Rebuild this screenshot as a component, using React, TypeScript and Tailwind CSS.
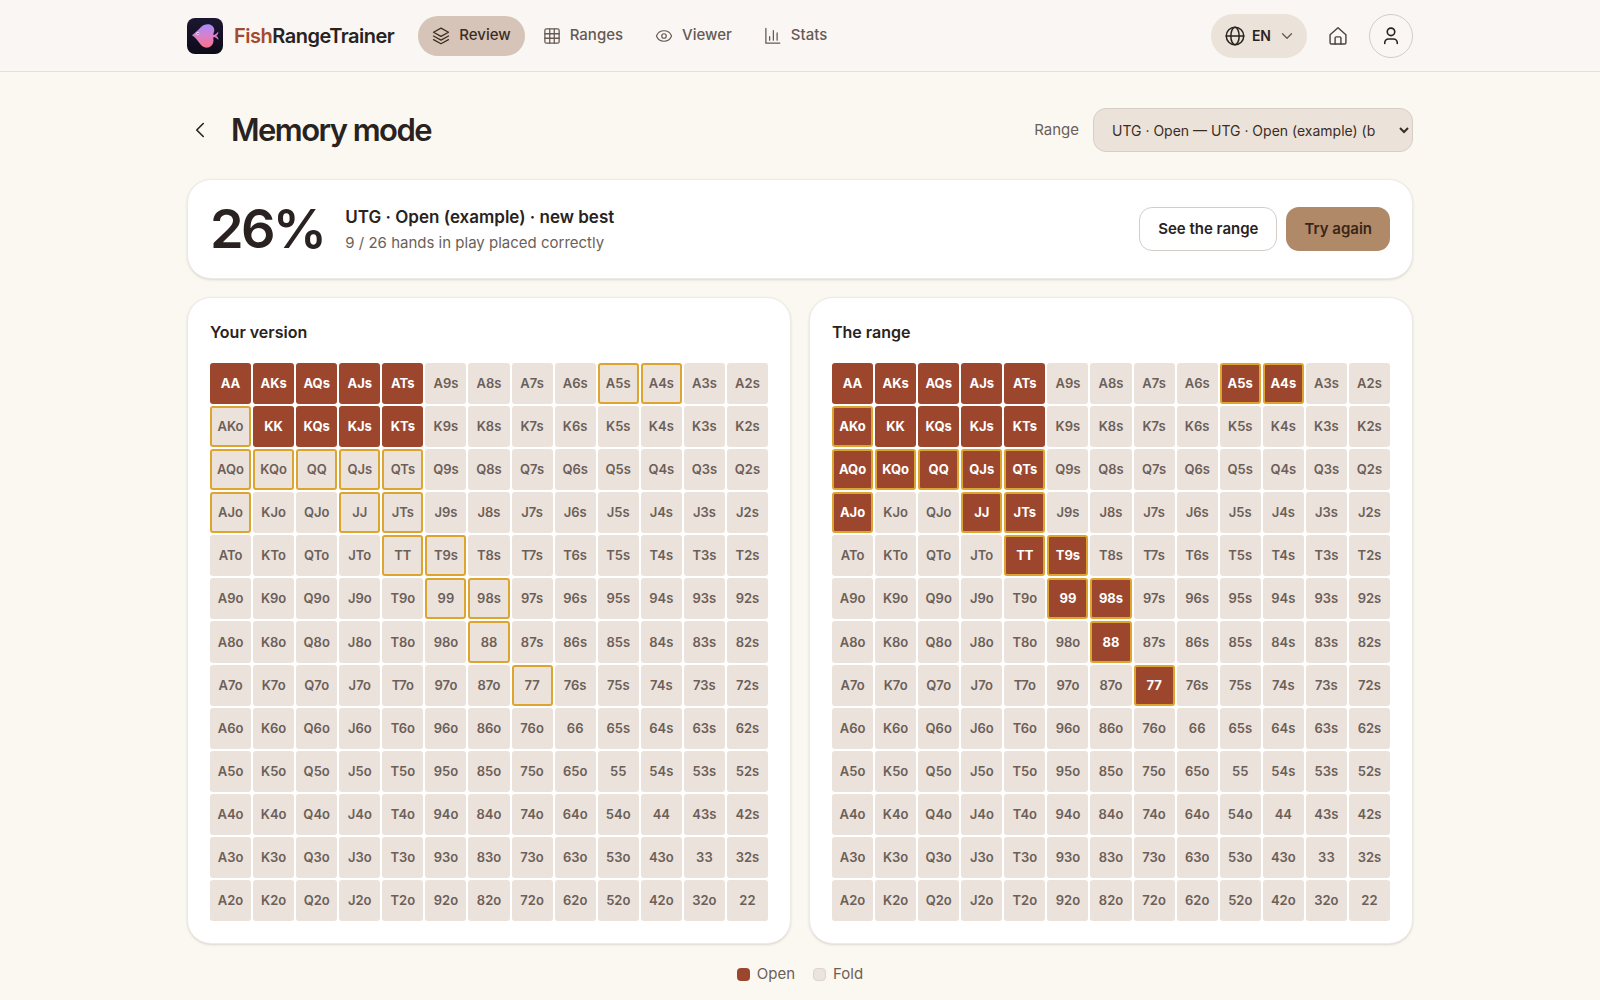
import React from "react";
import { ChevronDown, ChevronLeft, Eye } from "lucide-react";

const RANKS = "AKQJT98765432".split("");

const PLAYED = new Set(["AA", "AKs", "AQs", "AJs", "ATs", "KK", "KQs", "KJs", "KTs"]);
const MISSED = new Set([
  "A5s", "A4s", "AKo", "AQo", "KQo", "QQ", "QJs", "QTs", "AJo", "JJ", "JTs", "TT", "T9s", "99", "98s", "88", "77",
]);

function handAt(row: number, col: number) {
  if (row === col) return RANKS[row] + RANKS[col];
  return row < col ? RANKS[row] + RANKS[col] + "s" : RANKS[col] + RANKS[row] + "o";
}

const HANDS = RANKS.flatMap((_, row) => RANKS.map((__, col) => handAt(row, col)));

function Svg({ size, children, width = 1.7 }: { size: string; children: React.ReactNode; width?: number }) {
  return (
    <svg viewBox="0 0 24 24" className={size} fill="none" stroke="currentColor" strokeWidth={width} strokeLinecap="round" strokeLinejoin="round" aria-hidden="true">
      {children}
    </svg>
  );
}

function Logo() {
  return (
    <svg viewBox="0 0 36 36" className="size-9" aria-hidden="true">
      <defs>
        <linearGradient id="fish" x1="0" y1="0" x2="0" y2="1">
          <stop offset="0" stopColor="#a78bfa" />
          <stop offset="0.5" stopColor="#d980cc" />
          <stop offset="1" stopColor="#fb7185" />
        </linearGradient>
        <linearGradient id="tile" x1="0" y1="0" x2="0" y2="1">
          <stop offset="0" stopColor="#1c1730" />
          <stop offset="1" stopColor="#0d0a18" />
        </linearGradient>
      </defs>
      <rect width="36" height="36" rx="8" fill="url(#tile)" />
      <path
        d="M5 17.200C8.500 14.500 11 12 13.500 9.500C16.200 6.700 20 5.600 23 6.600C27 8 28.300 12 26.600 15.200C26.200 16 26.300 16.600 26.800 17C28.500 16.500 29.800 15.500 31.300 13.600C31.500 15.400 30.800 16.800 29.300 17.900C31 18.800 31.700 20.200 31.300 22C29.900 20.200 28.500 19.300 26.800 19C26.200 19.500 26.200 20.300 26.400 21.200C27 25.200 24.500 28.800 21 29.500C17.500 30.200 14.800 28.300 13 25.800C10.800 22.500 8.500 19.500 5 17.200Z"
        fill="url(#fish)"
      />
      <circle cx="10.800" cy="15.600" r="1.500" fill="#f5e9ff" />
      <circle cx="11" cy="15.600" r="0.700" fill="#1c1730" />
    </svg>
  );
}

const NAV = [
  {
    label: "Review",
    icon: (
      <Svg size="size-[18px]">
        <path d="M12 1.500 22 7l-10 5.500L2 7Z" />
        <path d="m2 12 10 5.500L22 12" />
        <path d="m2 16.800 10 5.500 10-5.500" />
      </Svg>
    ),
  },
  {
    label: "Ranges",
    icon: (
      <Svg size="size-[18px]">
        <rect x="2.500" y="2.500" width="19" height="19" rx="2" />
        <path d="M2.500 9h19M2.500 15h19M9 2.500v19M15 2.500v19" />
      </Svg>
    ),
  },
  { label: "Viewer", icon: <Eye className="size-[18px]" strokeWidth={1.6} aria-hidden="true" /> },
  {
    label: "Stats",
    icon: (
      <Svg size="size-[18px]">
        <path d="M2.500 2v19.500H21M7.500 17.500v-4.500M12.500 17.500V5M17.500 17.500V8" />
      </Svg>
    ),
  },
];

function Header() {
  return (
    <header className="border-b border-[#e3dedb] bg-[#faf6f3]">
      <div className="mx-auto flex h-[71px] max-w-[1226px] items-center">
        <a href="#home" className="flex items-center gap-[11px] text-xl font-semibold tracking-tight text-[#292220]">
          <Logo />
          <span>
            <span className="text-[#a44a2e]">Fish</span>RangeTrainer
          </span>
        </a>
        <nav className="ml-6 flex gap-1">
          {NAV.map((item, i) => (
            <a
              key={item.label}
              href={"#" + item.label.toLowerCase()}
              className={
                i === 0
                  ? "flex h-10 items-center gap-[9px] rounded-full bg-[#d5c4b7] px-3.5 text-[15px] font-medium text-[#3c2d24]"
                  : "flex h-10 items-center gap-[9px] rounded-full px-3.5 text-[15px] font-medium text-[#655a54]"
              }
            >
              {item.icon}
              {item.label}
            </a>
          ))}
        </nav>
        <div className="ml-auto flex items-center">
          <button className="flex h-11 items-center gap-[7px] rounded-full bg-[#ebe2da] pr-[11px] pl-3.5 text-sm font-semibold text-[#292220]">
            <Svg size="size-5" width={1.8}>
              <circle cx="12" cy="12" r="10.500" />
              <ellipse cx="12" cy="12" rx="5" ry="10.500" />
              <path d="M1.500 12h21" />
            </Svg>
            EN
            <ChevronDown className="size-[18px] text-[#655a54]" strokeWidth={1.7} aria-hidden="true" />
          </button>
          <button aria-label="Home" className="flex h-11 w-[62px] items-center justify-center text-[#4c423d]">
            <Svg size="size-5">
              <path d="M2.500 10.500 12 2l9.500 8.500V20a1.500 1.500 0 0 1-1.500 1.500H4A1.500 1.500 0 0 1 2.500 20Z" />
              <path d="M8.500 21.500v-7a1.500 1.500 0 0 1 1.500-1.500h4a1.500 1.500 0 0 1 1.500 1.500v7" />
            </Svg>
          </button>
          <button aria-label="Account" className="flex size-11 items-center justify-center rounded-full border border-[#d3cdca] text-[#292220]">
            <Svg size="size-5" width={1.9}>
              <circle cx="12" cy="7" r="4.500" />
              <path d="M4.500 21v-1a4.500 4.500 0 0 1 4.500-4.500h6a4.500 4.500 0 0 1 4.500 4.500v1" />
            </Svg>
          </button>
        </div>
      </div>
    </header>
  );
}

function cellClass(open: boolean, missed: boolean) {
  if (open && missed) return "bg-[#9c462d] font-bold text-white border-2 border-[#dda52f]";
  if (open) return "bg-[#9c462d] font-bold text-white";
  if (missed) return "bg-[#ebe2dc] font-semibold text-[#6b5f58] border-2 border-[#dda52f]";
  return "bg-[#ebe2dc] font-semibold text-[#6b5f58]";
}

function RangeGrid({ title, open }: { title: string; open: (hand: string) => boolean }) {
  return (
    <section className="rounded-3xl border border-[#eeeae6] bg-white p-[22px] shadow-sm">
      <h2 className="mb-[18px] text-base leading-[25px] font-semibold text-[#292220]">{title}</h2>
      <div className="grid grid-cols-13 gap-[2px]">
        {HANDS.map((hand) => (
          <div
            key={hand}
            className={"flex aspect-square items-center justify-center rounded-[3px] text-[13px] leading-none " + cellClass(open(hand), MISSED.has(hand))}
          >
            {hand}
          </div>
        ))}
      </div>
    </section>
  );
}

export default function App() {
  return (
    <div className="min-h-screen bg-[#fbf8f1] font-['Inter',sans-serif] text-[#292220]">
      <Header />
      <main className="mx-auto max-w-[1226px] pt-9">
        <div className="flex h-11 items-center">
          <button aria-label="Back" className="flex h-11 w-11 items-center">
            <ChevronLeft className="size-[26px]" strokeWidth={1.5} aria-hidden="true" />
          </button>
          <h1 className="text-[31px] leading-10 font-semibold tracking-tighter">Memory mode</h1>
          <label htmlFor="range" className="mr-3.5 ml-auto text-[15px] text-[#6b5f58]">
            Range
          </label>
          <select id="range" className="h-11 w-80 rounded-[13px] border border-[#d6cdc6] bg-[#ebe2da] px-3.5 text-sm text-[#3c2d24]">
            <option>UTG · Open — UTG · Open (example) (b</option>
          </select>
        </div>

        <section className="mt-[27px] flex items-center rounded-3xl border border-[#eeeae6] bg-white p-[22px] shadow-sm">
          <div className="text-[54px] leading-[54px] font-semibold tracking-tighter">26%</div>
          <div className="ml-[21px]">
            <h2 className="text-[17px] leading-7 font-semibold">UTG · Open (example) · new best</h2>
            <p className="text-[15px] leading-6 text-[#6b5f58]">9 / 26 hands in play placed correctly</p>
          </div>
          <div className="ml-auto flex gap-[9px]">
            <button className="h-11 rounded-[13px] border border-[#d3cdca] bg-white px-[18px] text-[15px] font-semibold">See the range</button>
            <button className="h-11 rounded-[13px] bg-[#b08968] px-[18px] text-[15px] font-semibold text-[#3a2619]">Try again</button>
          </div>
        </section>

        <div className="mt-[18px] grid grid-cols-2 gap-[18px]">
          <RangeGrid title="Your version" open={(hand) => PLAYED.has(hand)} />
          <RangeGrid title="The range" open={(hand) => PLAYED.has(hand) || MISSED.has(hand)} />
        </div>

        <ul className="mt-[18px] flex justify-center gap-[18px] text-[15px] leading-6 text-[#6b5f58]">
          <li className="flex items-center gap-[7px]">
            <span className="size-[13px] rounded-[4px] bg-[#9c462d]" />
            Open
          </li>
          <li className="flex items-center gap-[7px]">
            <span className="size-[13px] rounded-[4px] border border-[#ddd5cf] bg-[#ebe4de]" />
            Fold
          </li>
        </ul>
      </main>
    </div>
  );
}
